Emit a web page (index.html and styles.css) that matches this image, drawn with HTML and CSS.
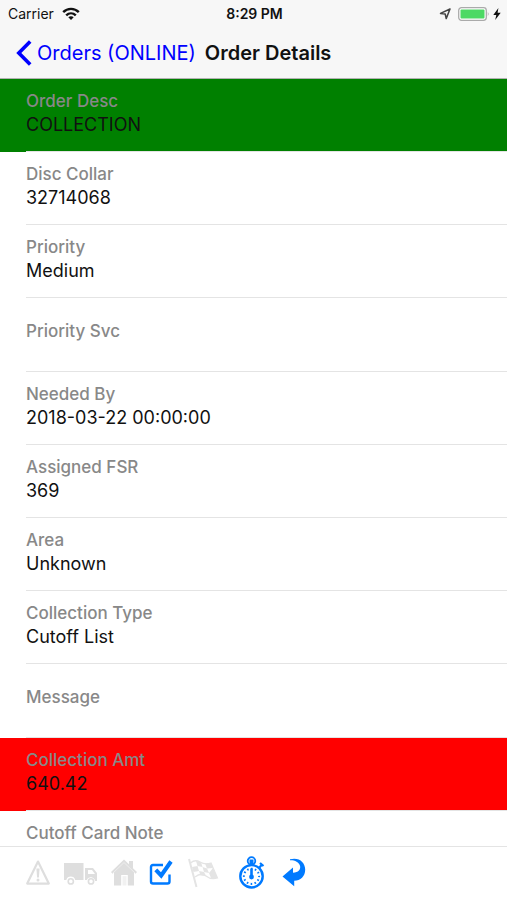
FILE: index.html
```html
<!DOCTYPE html>
<html lang="en">
<head>
<meta charset="utf-8">
<meta name="viewport" content="width=device-width, initial-scale=1">
<title>Order Details</title>
<link rel="stylesheet" href="styles.css">
</head>
<body>
<div class="app">
  <header class="header">
    <div class="status">
      <div class="carrier">
        <span>Carrier</span>
        <svg width="18" height="14" viewBox="0 0 18 14" fill="none" stroke="#111" stroke-width="2.4" aria-hidden="true">
          <path d="M1.2 5.2C5.6 .8 12.4 .8 16.8 5.2"/>
          <path d="M4.2 8.4C7 5.7 11 5.7 13.8 8.4"/>
          <path d="M9 13L6.3 10.3C7.8 9 10.2 9 11.7 10.3Z" fill="#111" stroke="none"/>
        </svg>
      </div>
      <time class="clock">8:29 PM</time>
      <div class="power">
        <svg width="16" height="12" viewBox="0 0 16 12" fill="none" stroke="#444" stroke-width="1.5" stroke-linejoin="round" aria-hidden="true">
          <path d="M11 1L1.5 5.4L6.2 6L7.2 10.6Z"/>
        </svg>
        <svg width="32" height="14" viewBox="0 0 32 14" aria-hidden="true">
          <rect x=".7" y=".7" width="27.6" height="12.6" rx="2.8" fill="#fff" stroke="#aaa" stroke-width="1.3"/>
          <rect x="2.5" y="2.5" width="24" height="9" rx="1" fill="#4cd964"/>
          <path d="M29.8 4.8Q31.6 7 29.8 9.2Z" fill="#aaa"/>
        </svg>
        <svg width="8" height="12" viewBox="0 0 8 12" aria-hidden="true">
          <path d="M5.4 0L.3 7H3.3L2.2 12L7.7 4.8H4.6Z" fill="#111"/>
        </svg>
      </div>
    </div>
    <nav class="nav">
      <a class="back" href="#orders">
        <svg width="16" height="26" viewBox="0 0 16 26" fill="none" stroke="#00f" stroke-width="3.6" aria-hidden="true">
          <path d="M14.2 1.5L2.8 13L14.2 24.5"/>
        </svg>
        <span>Orders (ONLINE)</span>
      </a>
      <h1 class="title">Order Details</h1>
    </nav>
  </header>

  <main class="content">
    <dl class="list">
      <div class="row green"><dt>Order Desc</dt><dd>COLLECTION</dd></div>
      <div class="row"><dt>Disc Collar</dt><dd>32714068</dd></div>
      <div class="row"><dt>Priority</dt><dd>Medium</dd></div>
      <div class="row empty"><dt>Priority Svc</dt></div>
      <div class="row"><dt>Needed By</dt><dd>2018-03-22 00:00:00</dd></div>
      <div class="row"><dt>Assigned FSR</dt><dd>369</dd></div>
      <div class="row"><dt>Area</dt><dd>Unknown</dd></div>
      <div class="row"><dt>Collection Type</dt><dd>Cutoff List</dd></div>
      <div class="row empty"><dt>Message</dt></div>
      <div class="row red"><dt>Collection Amt</dt><dd>640.42</dd></div>
      <div class="row"><dt>Cutoff Card Note</dt></div>
    </dl>
  </main>

  <footer class="toolbar">
    <button type="button" aria-label="Alert" disabled>
      <svg width="26" height="34" viewBox="0 0 26 34" fill="none" stroke="currentColor" aria-hidden="true">
        <path d="M12 5.6L22.8 27.6H1.2Z" stroke-width="2.2" stroke-linejoin="round"/>
        <path d="M10.4 12.5H13.6L12.9 21.5H11.1Z" fill="currentColor" stroke="none"/>
        <circle cx="12" cy="24" r="1.5" fill="currentColor" stroke="none"/>
      </svg>
    </button>
    <button type="button" aria-label="Dispatch" disabled>
      <svg width="35" height="34" viewBox="0 0 35 34" fill="currentColor" aria-hidden="true">
        <path d="M0 7H19.5V24H11.2A4.6 4.6 0 0 0 2.3 24H0Z"/>
        <path fill-rule="evenodd" d="M21 12H29L33 17V25H31A4.3 4.3 0 0 0 22.7 24H21ZM24 14V18H31L28 14Z"/>
        <circle cx="6.8" cy="25.4" r="2.6" fill="none" stroke="currentColor" stroke-width="1.6"/>
        <circle cx="27" cy="25.4" r="2.6" fill="none" stroke="currentColor" stroke-width="1.6"/>
      </svg>
    </button>
    <button type="button" aria-label="Home" disabled>
      <svg width="26" height="34" viewBox="0 0 26 34" fill="currentColor" aria-hidden="true">
        <path d="M13 3.5L18 8.3V5H22V12.2L26 16L24.6 17.8L23 16.5V29.5H16.8V19H10.2V29.5H3V16.5L1.4 17.8L0 16Z"/>
        <path d="M11.5 20.2H15.5V29.5H11.5Z" fill="#f1f1f1"/>
        <path d="M2 17L13 6.6L24 17" fill="none" stroke="#f1f1f1" stroke-width=".8"/>
      </svg>
    </button>
    <button type="button" aria-label="Complete">
      <svg width="26" height="34" viewBox="0 0 26 34" fill="none" stroke="currentColor" aria-hidden="true">
        <path d="M14 9H4Q2 9 2 11V25.5Q2 27.5 4 27.5H18.5Q20.5 27.5 20.5 25.5V18.5" stroke-width="2.4"/>
        <path d="M6.8 13.8L12.2 19.5L22 5.5" stroke-width="4"/>
      </svg>
    </button>
    <button class="faint" type="button" aria-label="Finish" disabled>
      <svg width="38" height="34" viewBox="0 0 38 34" fill="none" stroke="currentColor" aria-hidden="true">
        <path d="M2 3L9.5 31" stroke-width="2"/>
        <path d="M3.5 7Q8 3 13 6T24 7L30.5 22Q24 24 19 20T8 21" stroke-width="1.3"/>
        <path d="M9 5L14 6L15.5 11L10.5 10ZM18 7.5L24 7L26 12L20 12.5ZM5 11L10.5 10L12 15L6.5 16ZM15.5 11L20 12.5L22 17L17 16ZM26 12L28.3 17L22 17ZM12 15L17 16L19 20L13.5 19.5ZM22 17L28.3 17L30.5 22L24 22Z" fill="currentColor" stroke="none"/>
      </svg>
    </button>
    <button type="button" aria-label="Timer">
      <svg width="30" height="34" viewBox="0 0 30 34" fill="none" stroke="currentColor" aria-hidden="true">
        <circle cx="14.5" cy="20.3" r="11.2" stroke-width="2.4"/>
        <circle cx="14.5" cy="20.3" r="7.6" stroke-width="2" stroke-dasharray="1.6 2.379" stroke-dashoffset=".8"/>
        <circle cx="14.5" cy="5" r="3.8" stroke-width="1.8"/>
        <path d="M14.5 3.5V9" stroke-width="4"/>
        <path d="M22 12L25 8.5M23 7L26.5 10" stroke-width="2.2"/>
        <path d="M14.5 12.5V21" stroke-width="2.6"/>
        <circle cx="14.5" cy="21" r="2.4" fill="currentColor" stroke="none"/>
      </svg>
    </button>
    <button type="button" aria-label="Return">
      <svg width="28" height="34" viewBox="0 0 28 34" fill="currentColor" aria-hidden="true">
        <path d="M11 3.3C20 .8 26.2 6.5 26.2 13.5C26.2 20.5 21.5 24.5 15.2 24.8V30.2L3.5 20.5L14 11.5V16.8C19.5 16.5 22 13.5 21 9.8C20 6.2 16 4.2 11 4.3Z"/>
      </svg>
    </button>
  </footer>
</div>
</body>
</html>
```

FILE: styles.css
```css
* {
  box-sizing: border-box;
}

body {
  margin: 0;
  background: #fff;
  color: #111;
  font-family: Inter, "Liberation Sans", sans-serif;
}

.app {
  display: flex;
  flex-direction: column;
  height: 100vh;
}

.header {
  flex: none;
  background: #f7f7f7;
  border-bottom: 1px solid #b2b2b2;
}

.status {
  display: grid;
  grid-template-columns: 1fr auto 1fr;
  align-items: center;
  height: 27px;
  padding: 0 6px 0 8px;
  font-size: 14px;
  line-height: 18px;
}

.carrier,
.power {
  display: flex;
  align-items: center;
  gap: 8px;
}

.power {
  justify-content: flex-end;
  gap: 3px;
}

.clock {
  font-weight: 600;
}

.nav {
  display: flex;
  align-items: center;
  gap: 9px;
  height: 51px;
  padding: 0 16px;
  font-size: 20px;
  line-height: 24px;
  white-space: nowrap;
}

.back {
  display: flex;
  align-items: center;
  gap: 5px;
  color: #00f;
  text-decoration: none;
}

.title {
  margin: 0;
  font-size: 20px;
  font-weight: 600;
}

.content {
  flex: 1;
  min-height: 0;
  overflow: hidden;
}

.list {
  margin: 0;
}

.row {
  height: 73px;
  padding: 10px 0 0 26px;
  background: linear-gradient(#e4e4e4, #e4e4e4) 26px 100% / 100% 1px no-repeat;
}

.empty {
  height: 74px;
  padding-top: 21px;
}

.green {
  background-color: #008000;
}

.red {
  background-color: #f00;
}

dt {
  color: #888;
  font-size: 17px;
  font-weight: 500;
  line-height: 24px;
}

dd {
  margin: 0;
  font-size: 18px;
  line-height: 24px;
}

.toolbar {
  display: flex;
  flex: none;
  align-items: center;
  gap: 12px;
  height: 54px;
  padding: 0 26px 2px;
  background: #fff;
  border-top: 1px solid #e4e4e4;
}

.toolbar button {
  display: flex;
  padding: 0;
  background: none;
  border: 0;
  color: #007aff;
}

.toolbar button:disabled {
  color: #dedede;
}

.toolbar .faint:disabled {
  color: #e4e4e4;
}
```
